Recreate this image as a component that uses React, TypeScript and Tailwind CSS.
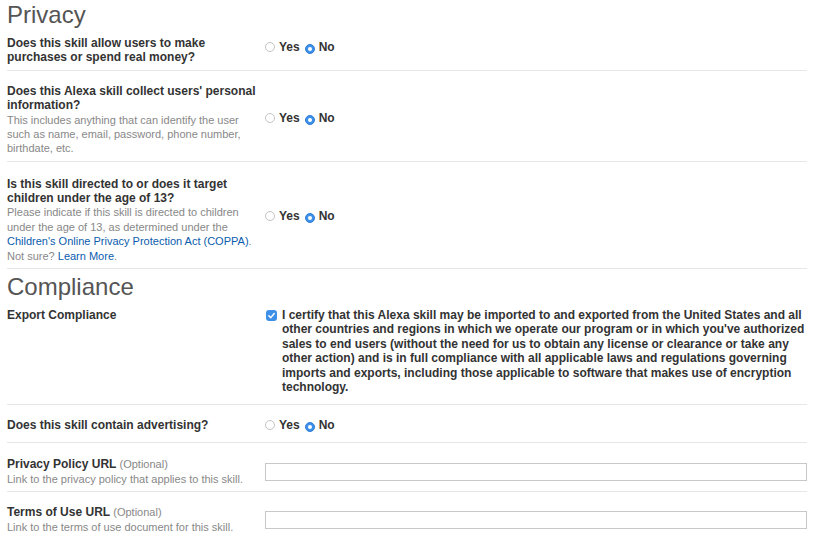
import React from 'react'

const font = { fontFamily: '"Liberation Sans", Arial, Helvetica, sans-serif' }

function Radio({ checked }: { checked?: boolean }) {
  return checked ? (
    <span className="inline-flex items-center justify-center w-[10px] h-[10px] rounded-full bg-[#3d8fe8] border border-[#2f7fd9]">
      <span className="w-[4px] h-[4px] rounded-full bg-white" />
    </span>
  ) : (
    <span className="inline-block w-[10px] h-[10px] rounded-full bg-white border border-[#c4c4c4]" />
  )
}

function YesNo() {
  return (
    <div className="flex items-center text-[12px] font-bold text-[#333] leading-[14px]">
      <Radio />
      <span className="ml-[4px]">Yes</span>
      <span className="ml-[5px]">
        <Radio checked />
      </span>
      <span className="ml-[4px]">No</span>
    </div>
  )
}

function Row({
  children,
  right,
  className,
  border = true,
}: {
  children: React.ReactNode
  right: React.ReactNode
  className?: string
  border?: boolean
}) {
  return (
    <div className={`flex items-center gap-[8px] ${border ? 'border-b border-[#e6e6e6]' : ''} ${className ?? ''}`}>
      <div className="w-[250px] shrink-0">{children}</div>
      <div className="flex-1">{right}</div>
    </div>
  )
}

const label = 'text-[12px] font-bold text-[#333] leading-[14px]'
const help = 'text-[11px] text-[#888]'
const link = 'text-[#0b5cad]'

export default function App() {
  return (
    <div className="w-[820px] h-[539px] bg-white overflow-hidden" style={font}>
      <div className="w-[800px] ml-[7px]">
        <h2 className="text-[24px] leading-[30px] text-[#555] font-normal">Privacy</h2>

        <Row className="pt-[6px] pb-[6px]" right={<div className="-mt-[6px]"><YesNo /></div>}>
          <div className={label}>
            Does this skill allow users to make purchases or spend real money?
          </div>
        </Row>

        <Row className="pt-[13px] pb-[6px]" right={<div className="-mt-[4px]"><YesNo /></div>}>
          <div className={label}>Does this Alexa skill collect users' personal information?</div>
          <div className={`${help} leading-[14px] mt-[1px]`}>
            This includes anything that can identify the user such as name, email, password, phone number,
            birthdate, etc.
          </div>
        </Row>

        <Row className="pt-[15px] pb-[5px]" right={<div className="-mt-[8px]"><YesNo /></div>}>
          <div className={label}>Is this skill directed to or does it target children under the age of 13?</div>
          <div className={`${help} leading-[14.5px]`}>
            Please indicate if this skill is directed to children under the age of 13, as determined under the{' '}
            <span className={link}>Children's Online Privacy Protection Act (COPPA)</span>. Not sure?{' '}
            <span className={link}>Learn More</span>.
          </div>
        </Row>

        <h2 className="text-[24px] leading-[30px] text-[#555] font-normal mt-[3px]">Compliance</h2>

        <div className="flex items-start gap-[8px] border-b border-[#e6e6e6] pt-[6px] pb-[10px]">
          <div className={`w-[250px] shrink-0 ${label}`}>Export Compliance</div>
          <div className="flex-1 flex items-start">
            <span className="mt-[2px] ml-[1px] shrink-0 inline-flex items-center justify-center w-[11px] h-[11px] rounded-[3px] bg-[#3d8fe8]">
              <svg width="9" height="9" viewBox="0 0 10 10">
                <path d="M2 5.2 L4.2 7.4 L8 2.8" fill="none" stroke="white" strokeWidth="1.6" strokeLinecap="round" strokeLinejoin="round" />
              </svg>
            </span>
            <p className="ml-[5px] text-[12px] font-bold text-[#333] leading-[14.4px]">
              I certify that this Alexa skill may be imported to and exported from the United States and all other
              countries and regions in which we operate our program or in which you've authorized sales to end users
              (without the need for us to obtain any license or clearance or take any other action) and is in full
              compliance with all applicable laws and regulations governing imports and exports, including those
              applicable to software that makes use of encryption technology.
            </p>
          </div>
        </div>

        <Row className="pt-[13px] pb-[10px]" right={<YesNo />}>
          <div className={label}>Does this skill contain advertising?</div>
        </Row>

        <Row
          className="pt-[14px] pb-[5px]"
          right={<input className="block w-full h-[18px] border border-[#c8c8c8] bg-white outline-none" />}
        >
          <div className={label}>
            Privacy Policy URL <span className="text-[11px] font-normal text-[#888]">(Optional)</span>
          </div>
          <div className={`${help} leading-[14px] mt-[1px]`}>Link to the privacy policy that applies to this skill.</div>
        </Row>

        <Row
          className="pt-[13px] pb-[5px]"
          border={false}
          right={<input className="block w-full h-[18px] border border-[#c8c8c8] bg-white outline-none" />}
        >
          <div className={label}>
            Terms of Use URL <span className="text-[11px] font-normal text-[#888]">(Optional)</span>
          </div>
          <div className={`${help} leading-[14px] mt-[1px]`}>Link to the terms of use document for this skill.</div>
        </Row>
      </div>
    </div>
  )
}
